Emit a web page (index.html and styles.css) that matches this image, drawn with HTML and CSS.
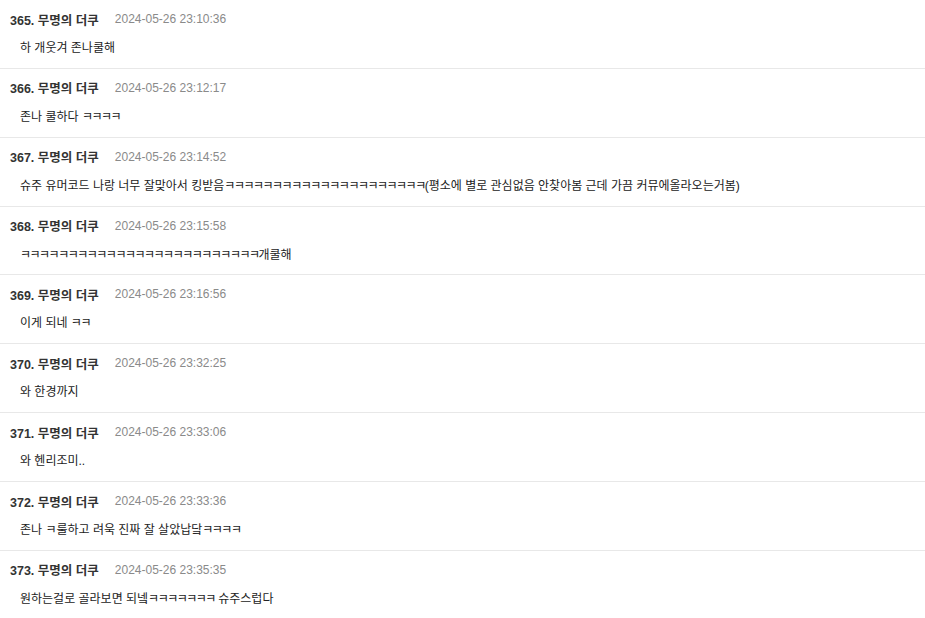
FILE: index.html
```html
<!DOCTYPE html>
<html lang="ko">
  <head>
    <meta charset="UTF-8" />
    <meta name="viewport" content="width=device-width, initial-scale=1.0" />
    <title>댓글</title>
    <link rel="stylesheet" href="styles.css">
  </head>
  <body>
    <ul class="comment-list">
      <li class="comment">
        <div class="comment-head"><span class="comment-name">365. 무명의 더쿠</span><span class="comment-date">2024-05-26 23:10:36</span></div>
        <div class="comment-body">하 개웃겨 존나쿨해</div>
      </li>
      <li class="comment">
        <div class="comment-head"><span class="comment-name">366. 무명의 더쿠</span><span class="comment-date">2024-05-26 23:12:17</span></div>
        <div class="comment-body">존나 쿨하다 <span class="laugh">ㅋㅋㅋㅋ</span></div>
      </li>
      <li class="comment">
        <div class="comment-head"><span class="comment-name">367. 무명의 더쿠</span><span class="comment-date">2024-05-26 23:14:52</span></div>
        <div class="comment-body">슈주 유머코드 나랑 너무 잘맞아서 킹받음<span class="laugh">ㅋㅋㅋㅋㅋㅋㅋㅋㅋㅋㅋㅋㅋㅋㅋㅋㅋㅋㅋㅋㅋ</span>(평소에 별로 관심없음 안찾아봄 근데 가끔 커뮤에올라오는거봄)</div>
      </li>
      <li class="comment">
        <div class="comment-head"><span class="comment-name">368. 무명의 더쿠</span><span class="comment-date">2024-05-26 23:15:58</span></div>
        <div class="comment-body"><span class="laugh">ㅋㅋㅋㅋㅋㅋㅋㅋㅋㅋㅋㅋㅋㅋㅋㅋㅋㅋㅋㅋㅋㅋㅋㅋㅋ</span>개쿨해</div>
      </li>
      <li class="comment">
        <div class="comment-head"><span class="comment-name">369. 무명의 더쿠</span><span class="comment-date">2024-05-26 23:16:56</span></div>
        <div class="comment-body">이게 되네 <span class="laugh">ㅋㅋ</span></div>
      </li>
      <li class="comment">
        <div class="comment-head"><span class="comment-name">370. 무명의 더쿠</span><span class="comment-date">2024-05-26 23:32:25</span></div>
        <div class="comment-body">와 한경까지</div>
      </li>
      <li class="comment">
        <div class="comment-head"><span class="comment-name">371. 무명의 더쿠</span><span class="comment-date">2024-05-26 23:33:06</span></div>
        <div class="comment-body">와 헨리조미..</div>
      </li>
      <li class="comment">
        <div class="comment-head"><span class="comment-name">372. 무명의 더쿠</span><span class="comment-date">2024-05-26 23:33:36</span></div>
        <div class="comment-body">존나 ㅋ룰하고 려욱 진짜 잘 살았납닼<span class="laugh">ㅋㅋㅋㅋ</span></div>
      </li>
      <li class="comment">
        <div class="comment-head"><span class="comment-name">373. 무명의 더쿠</span><span class="comment-date">2024-05-26 23:35:35</span></div>
        <div class="comment-body">원하는걸로 골라보면 되넼<span class="laugh">ㅋㅋㅋㅋㅋㅋㅋ</span> 슈주스럽다</div>
      </li>
    </ul>
  </body>
</html>
```

FILE: styles.css
```css
body {
  margin: 0;
  padding: 0;
  background: #fff;
  font-family: "Liberation Sans", "Noto Sans CJK KR", sans-serif;
  color: #222;
}

.comment-list {
  list-style: none;
  margin: 0;
  padding: 0;
}

.comment {
  height: 68.86px;
  box-sizing: border-box;
  padding: 10px 0 0 10px;
  border-bottom: 1px solid #e8e8e8;
}

.comment-head {
  display: flex;
  align-items: center;
  gap: 16px;
  height: 18px;
}

.comment-name {
  font-size: 12.5px;
  font-weight: bold;
  color: #333;
}

.comment-date {
  font-size: 12px;
  color: #8a8a8a;
}

.comment-body {
  margin-top: 11px;
  padding-left: 10px;
  font-size: 12px;
  line-height: 18px;
  color: #222;
}

/* jamo runs are narrower in the original font */
.laugh {
  letter-spacing: -1.5px;
}
```
